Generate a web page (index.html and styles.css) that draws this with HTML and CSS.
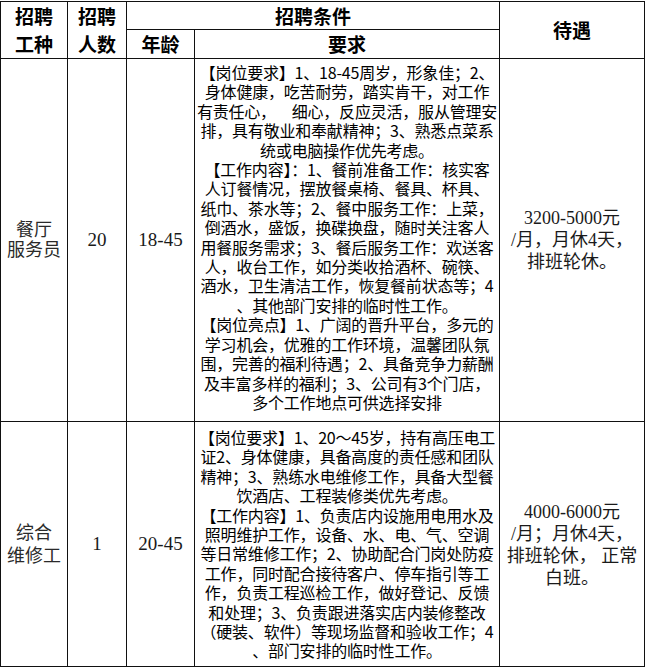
FILE: index.html
```html
<!DOCTYPE html>
<html lang="zh-CN">
<head>
<meta charset="utf-8">
<title>招聘</title>
<link rel="stylesheet" href="styles.css">
</head>
<body>
<table class="jobs">
  <colgroup>
    <col class="c-type">
    <col class="c-num">
    <col class="c-age">
    <col class="c-req">
    <col class="c-pay">
  </colgroup>
  <thead>
    <tr class="h1">
      <th rowspan="2" class="th-two"><span class="ln">招聘</span><span class="ln">工种</span></th>
      <th rowspan="2" class="th-two"><span class="ln">招聘</span><span class="ln">人数</span></th>
      <th colspan="2">招聘条件</th>
      <th rowspan="2">待遇</th>
    </tr>
    <tr class="h2">
      <th>年龄</th>
      <th>要求</th>
    </tr>
  </thead>
  <tbody>
    <tr class="r1">
      <td class="name"><span class="ln">餐厅</span><span class="ln">服务员</span></td>
      <td class="num">20</td>
      <td class="num">18-45</td>
      <td class="req">
        <span class="ln">【岗位要求】1、18-45周岁，形象佳；2、</span>
        <span class="ln">身体健康，吃苦耐劳，踏实肯干，对工作</span>
        <span class="ln">有责任心，&emsp;细心，反应灵活，服从管理安</span>
        <span class="ln">排，具有敬业和奉献精神；3、熟悉点菜系</span>
        <span class="ln">统或电脑操作优先考虑。</span>
        <span class="ln">【工作内容】：1、餐前准备工作：核实客</span>
        <span class="ln">人订餐情况，摆放餐桌椅、餐具、杯具、</span>
        <span class="ln">纸巾、茶水等；2、餐中服务工作：上菜，</span>
        <span class="ln">倒酒水，盛饭，换碟换盘，随时关注客人</span>
        <span class="ln">用餐服务需求；3、餐后服务工作：欢送客</span>
        <span class="ln">人，收台工作，如分类收拾酒杯、碗筷、</span>
        <span class="ln">酒水，卫生清洁工作，恢复餐前状态等；4</span>
        <span class="ln">、其他部门安排的临时性工作。</span>
        <span class="ln">【岗位亮点】1、广阔的晋升平台，多元的</span>
        <span class="ln">学习机会，优雅的工作环境，温馨团队氛</span>
        <span class="ln">围，完善的福利待遇；2、具备竞争力薪酬</span>
        <span class="ln">及丰富多样的福利；3、公司有3个门店，</span>
        <span class="ln">多个工作地点可供选择安排</span>
      </td>
      <td class="pay"><span class="ln">3200-5000元</span><span class="ln">/月，月休4天，</span><span class="ln">排班轮休。</span></td>
    </tr>
    <tr class="r2">
      <td class="name name2"><span class="ln">综合</span><span class="ln">维修工</span></td>
      <td class="num">1</td>
      <td class="num">20-45</td>
      <td class="req">
        <span class="ln">【岗位要求】1、20～45岁，持有高压电工</span>
        <span class="ln">证2、身体健康，具备高度的责任感和团队</span>
        <span class="ln">精神；3、熟练水电维修工作，具备大型餐</span>
        <span class="ln">饮酒店、工程装修类优先考虑。</span>
        <span class="ln">【工作内容】1、负责店内设施用电用水及</span>
        <span class="ln">照明维护工作，设备、水、电、气、空调</span>
        <span class="ln">等日常维修工作；2、协助配合门岗处防疫</span>
        <span class="ln">工作，同时配合接待客户、停车指引等工</span>
        <span class="ln">作，负责工程巡检工作，做好登记、反馈</span>
        <span class="ln">和处理；3、负责跟进落实店内装修整改</span>
        <span class="ln">（硬装、软件）等现场监督和验收工作；4</span>
        <span class="ln">、部门安排的临时性工作。</span>
      </td>
      <td class="pay pay2"><span class="ln">4000-6000元</span><span class="ln">/月；月休4天，</span><span class="ln">排班轮休，&nbsp;正常</span><span class="ln">白班。</span></td>
    </tr>
  </tbody>
</table>
</body>
</html>
```

FILE: styles.css
```css
html, body {
  margin: 0;
  padding: 0;
  background: #ffffff;
}

.jobs {
  margin: 1px 0 0 0;
  border-collapse: collapse;
  table-layout: fixed;
  width: 645px;
  color: #000;
  font-family: "Noto Sans CJK SC", sans-serif;
}

.c-type { width: 67px; }
.c-num { width: 59px; }
.c-age { width: 68px; }
.c-req { width: 305px; }
.c-pay { width: 145px; }

.jobs th,
.jobs td {
  border: 1px solid #111;
  padding: 0;
  text-align: center;
  vertical-align: middle;
}

.ln {
  display: block;
  white-space: nowrap;
}

.jobs th {
  font-size: 19px;
  font-weight: 700;
  line-height: 26px;
}

.jobs th.th-two {
  line-height: 28px;
}

.h1 { height: 28px; }
.h2 { height: 29px; }
.r1 { height: 363px; }
.r2 { height: 245px; }

.name {
  font-family: "Liberation Serif", "Noto Sans CJK SC", serif;
  font-size: 18px;
  line-height: 20px;
  color: #2a2a2a;
}

.jobs td.name2 {
  line-height: 23px;
  padding-top: 2px;
}

.num {
  font-family: "Liberation Serif", serif;
  font-size: 19px;
  color: #1a1a1a;
}

.req {
  font-size: 16px;
  line-height: 19.4px;
  letter-spacing: -0.2px;
}

.jobs td.req {
  vertical-align: top;
  padding-top: 4px;
}

.r2 td.req {
  padding-top: 6px;
}

.pay {
  font-family: "Liberation Serif", "Noto Sans CJK SC", serif;
  font-size: 18px;
  line-height: 22px;
  color: #1a1a1a;
}

.jobs td.pay2 {
  padding-top: 2px;
}
```
